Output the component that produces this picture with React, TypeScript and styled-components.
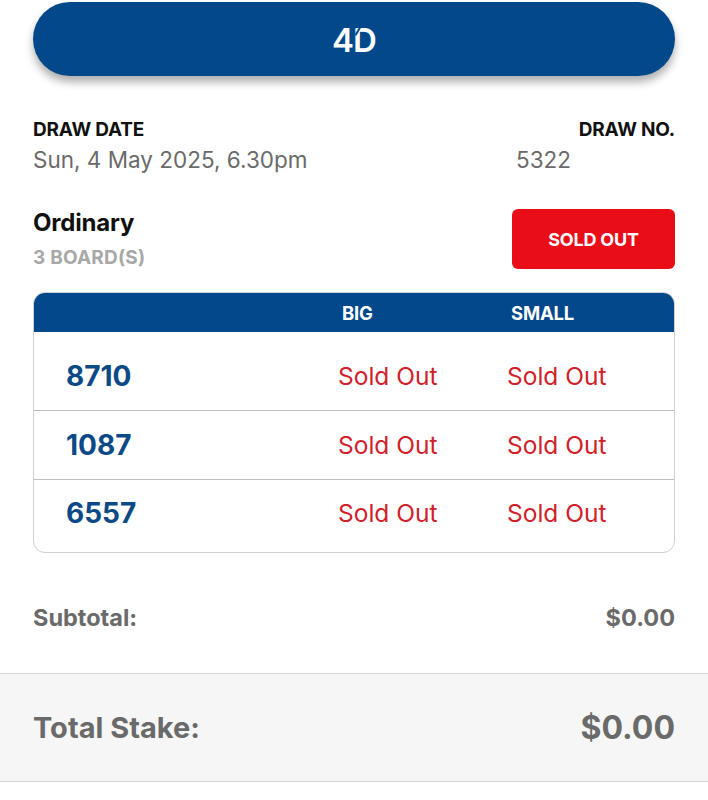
import React from 'react'
import styled, { createGlobalStyle } from 'styled-components'

type Board = {
  number: string
  big: string
  small: string
}

const boards: Array<Board> = [
  { number: '8710', big: 'Sold Out', small: 'Sold Out' },
  { number: '1087', big: 'Sold Out', small: 'Sold Out' },
  { number: '6557', big: 'Sold Out', small: 'Sold Out' }
]

// rows in the reference are not all the same height, and the text sits a bit off centre
const rowLayout = [
  { height: 78, shift: 10 },
  { height: 69, shift: 0 },
  { height: 73, shift: -6 }
]

const GlobalStyle = createGlobalStyle`
  body {
    margin: 0;
    background: #fff;
    font-family: Inter, Roboto, 'Liberation Sans', sans-serif;
  }
`

const App: React.FunctionComponent = () => {
  return (
    <>
      <GlobalStyle />
      <Page>
        <Content>
          <GameBanner>
            <GameLogo>
              4<LogoD>D</LogoD>
            </GameLogo>
          </GameBanner>

          <DrawRow>
            <div>
              <DrawLabel>DRAW DATE</DrawLabel>
              <DrawValue>Sun, 4 May 2025, 6.30pm</DrawValue>
            </div>
            <DrawNoBlock>
              <DrawLabel $right>DRAW NO.</DrawLabel>
              <DrawValue>5322</DrawValue>
            </DrawNoBlock>
          </DrawRow>

          <BetRow>
            <div>
              <BetType>Ordinary</BetType>
              <BoardCount>3 BOARD(S)</BoardCount>
            </div>
            <SoldOutButton>SOLD OUT</SoldOutButton>
          </BetRow>

          <BoardTable>
            <TableHead>
              <span />
              <HeadCell>BIG</HeadCell>
              <HeadCell>SMALL</HeadCell>
            </TableHead>
            {boards.map((b, i) => (
              <TableRow
                key={b.number}
                $height={rowLayout[i].height}
                $shift={rowLayout[i].shift}
              >
                <BoardNumber>{b.number}</BoardNumber>
                <StakeCell>{b.big}</StakeCell>
                <StakeCell>{b.small}</StakeCell>
              </TableRow>
            ))}
          </BoardTable>

          <SubtotalRow>
            <span>Subtotal:</span>
            <span>$0.00</span>
          </SubtotalRow>
        </Content>

        <TotalBar>
          <TotalLabel>Total Stake:</TotalLabel>
          <TotalAmount>$0.00</TotalAmount>
        </TotalBar>
      </Page>
    </>
  )
}

const Page = styled.div`
  width: 708px;
  min-height: 800px;
  background: #fff;
  display: flex;
  flex-direction: column;
`

const Content = styled.div`
  display: flex;
  flex-direction: column;
  padding: 2px 33px 0 33px;
`

const GameBanner = styled.div`
  height: 74px;
  border-radius: 37px;
  background: #03488b;
  box-shadow: 0 6px 9px rgba(0, 0, 0, 0.32);
  display: flex;
  align-items: center;
  justify-content: center;
`

const GameLogo = styled.div`
  color: #fff;
  font-size: 33px;
  font-weight: 600;
  letter-spacing: -1px;
  line-height: 1;
  margin-top: 2px;
`

const LogoD = styled.span`
  position: relative;
  display: inline-block;
  &::before {
    content: '';
    position: absolute;
    left: 4px;
    top: 2px;
    width: 2px;
    height: 10px;
    background: #03488b;
    transform: rotate(30deg);
  }
`

const DrawRow = styled.div`
  display: flex;
  justify-content: space-between;
  margin-top: 44px;
`

const DrawNoBlock = styled.div`
  display: flex;
  flex-direction: column;
  width: 159px;
`

const DrawLabel = styled.div<{ $right?: boolean }>`
  font-size: 19px;
  font-weight: 700;
  color: #111;
  line-height: 20px;
  letter-spacing: -0.2px;
  text-align: ${p => (p.$right ? 'right' : 'left')};
`

const DrawValue = styled.div`
  font-size: 22.5px;
  color: #6a6a6a;
  line-height: 26px;
  margin-top: 7px;
`

const BetRow = styled.div`
  display: flex;
  justify-content: space-between;
  align-items: flex-start;
  margin-top: 36px;
`

const BetType = styled.div`
  font-size: 24px;
  font-weight: 700;
  color: #111;
  line-height: 28px;
  letter-spacing: -0.2px;
`

const BoardCount = styled.div`
  font-size: 19px;
  font-weight: 700;
  color: #a8a8a8;
  line-height: 22px;
  margin-top: 10px;
  letter-spacing: 0.2px;
`

const SoldOutButton = styled.div`
  width: 163px;
  height: 60px;
  border-radius: 6px;
  background: #e80d17;
  color: #fff;
  font-size: 18px;
  font-weight: 700;
  letter-spacing: -0.2px;
  display: flex;
  align-items: center;
  justify-content: center;
`

const BoardTable = styled.div`
  margin-top: 23px;
  border: 1px solid #cfcfcf;
  border-radius: 12px;
  overflow: hidden;
`

const columns = `grid-template-columns: 304px 169px 1fr;`

const TableHead = styled.div`
  display: grid;
  ${columns}
  height: 39px;
  align-items: center;
  background: #03488b;
`

const HeadCell = styled.div`
  color: #fff;
  font-size: 18.5px;
  font-weight: 700;
  letter-spacing: -0.2px;
  padding-left: 4px;
`

const TableRow = styled.div<{ $height: number; $shift: number }>`
  display: grid;
  ${columns}
  height: ${p => p.$height}px;
  box-sizing: border-box;
  align-items: center;
  padding-top: ${p => Math.max(p.$shift, 0)}px;
  padding-bottom: ${p => Math.max(-p.$shift, 0)}px;
  & + & {
    border-top: 1px solid #bdbdbd;
  }
`

const BoardNumber = styled.div`
  color: #0b4a86;
  font-size: 28px;
  font-weight: 700;
  padding-left: 32px;
`

const StakeCell = styled.div`
  color: #d0202a;
  font-size: 24.5px;
`

const SubtotalRow = styled.div`
  display: flex;
  justify-content: space-between;
  margin-top: 52px;
  font-size: 23.5px;
  font-weight: 700;
  color: #6a6a6a;
  line-height: 26px;
`

const TotalBar = styled.div`
  margin-top: 42px;
  height: 107px;
  background: #f6f6f6;
  border-top: 1.5px solid #d6d6d6;
  border-bottom: 1.5px solid #d6d6d6;
  display: flex;
  justify-content: space-between;
  align-items: center;
  padding: 0 33px;
  color: #6a6a6a;
  font-weight: 700;
`

const TotalLabel = styled.span`
  font-size: 29px;
`

const TotalAmount = styled.span`
  font-size: 32px;
`

export default App
